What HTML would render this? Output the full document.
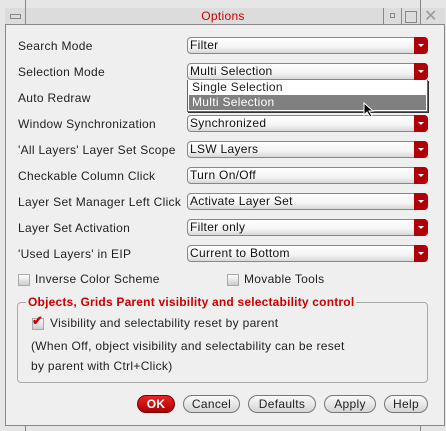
<!DOCTYPE html><html><head><style>
body{margin:0;width:446px;height:431px;background:#e6e6e6;position:relative;overflow:hidden;font-family:"Liberation Sans",sans-serif;font-size:12px;letter-spacing:0.3px;color:#222}
.a{position:absolute}
.l{position:absolute;left:18px}
.cb{position:absolute;left:187px;width:241px;height:17px;border:1px solid #888;border-radius:4px;background:linear-gradient(#fff,#f4f4f4 60%,#d8d8d8);box-sizing:border-box;padding-left:2px;line-height:15px;color:#111}
.cb i{position:absolute;right:-1px;top:-1px;width:14px;height:17px;background:#b00008;border-radius:0 4px 4px 0}
.cb i:after{content:"";position:absolute;left:4px;top:7px;border:3px solid transparent;border-top:3px solid #fff}
.btn{position:absolute;top:395px;height:18px;border:1px solid #777;border-radius:9px;background:linear-gradient(#fafafa,#d4d4d4);box-sizing:border-box;text-align:center;line-height:16px;color:#222}
.chk{position:absolute;width:10px;height:10px;background:linear-gradient(#fff,#ccc);border:1px solid #aaa}
</style></head><body>
<div class="a" style="left:5px;top:8px;width:440px;height:418px;background:#efefef;border:1px solid #888;box-sizing:border-box"></div>
<div class="a" style="left:5px;top:8px;width:440px;height:17px;background:#dcdcdc;border-bottom:1px solid #888;box-sizing:border-box"></div>
<div class="a" style="left:25px;top:0;width:1px;height:25px;background:#888"></div>
<div class="a" style="left:383px;top:8px;width:1px;height:17px;background:#888"></div>
<div class="a" style="left:401px;top:8px;width:1px;height:17px;background:#888"></div>
<div class="a" style="left:420px;top:0;width:1px;height:25px;background:#888"></div>
<div class="a" style="left:10px;top:14px;width:9px;height:3px;border:1px solid #888"></div>
<div class="a" style="left:390px;top:13px;width:3px;height:3px;border:1px solid #888"></div>
<div class="a" style="left:405px;top:11px;width:10px;height:10px;border:1px solid #888"></div>
<div class="a" style="left:424px;top:8px;color:#999;font-size:16px;line-height:17px">✕</div>
<div class="a" style="left:0;top:9px;width:446px;text-align:center;color:#c00;line-height:15px">Options</div>
<div class="a" style="left:25px;top:425px;width:1px;height:6px;background:#888"></div>
<div class="a" style="left:420px;top:425px;width:1px;height:6px;background:#888"></div>

<div class="l" style="top:39px">Search Mode</div>
<div class="l" style="top:65px">Selection Mode</div>
<div class="l" style="top:91px">Auto Redraw</div>
<div class="l" style="top:117px">Window Synchronization</div>
<div class="l" style="top:143px">'All Layers' Layer Set Scope</div>
<div class="l" style="top:169px">Checkable Column Click</div>
<div class="l" style="top:195px">Layer Set Manager Left Click</div>
<div class="l" style="top:221px">Layer Set Activation</div>
<div class="l" style="top:247px">'Used Layers' in EIP</div>

<div class="cb" style="top:37px">Filter<i></i></div>
<div class="cb" style="top:63px">Multi Selection<i></i></div>
<div class="cb" style="top:115px">Synchronized<i></i></div>
<div class="cb" style="top:141px">LSW Layers<i></i></div>
<div class="cb" style="top:167px">Turn On/Off<i></i></div>
<div class="cb" style="top:193px">Activate Layer Set<i></i></div>
<div class="cb" style="top:219px">Filter only<i></i></div>
<div class="cb" style="top:245px">Current to Bottom<i></i></div>

<div class="a" style="left:187px;top:80px;width:241px;height:32px;background:#fff;border:1px solid #666;border-top:none;box-sizing:border-box;box-shadow:1px 1px 0 #333">
<div style="padding-left:4px;line-height:15px">Single Selection</div>
<div style="margin:0 1px;padding-left:3px;background:#808080;color:#fff;line-height:15px">Multi Selection</div></div>
<svg class="a" style="left:363px;top:102px" width="12" height="16"><path d="M1 1 L1 13 L4 10 L7 15 L9 14 L6 9 L10 9 Z" fill="#000" stroke="#fff" stroke-width="1"/></svg>

<div class="chk" style="left:18px;top:274px"></div><div class="a" style="left:35px;top:272px">Inverse Color Scheme</div>
<div class="chk" style="left:227px;top:274px"></div><div class="a" style="left:244px;top:272px">Movable Tools</div>

<div class="a" style="left:17px;top:302px;width:411px;height:81px;border:1px solid #aaa;border-radius:4px;box-sizing:border-box"></div>
<div class="a" style="left:26px;top:295px;background:#efefef;color:#c00;font-weight:bold;padding:0 2px;letter-spacing:0.2px">Objects, Grids Parent visibility and selectability control</div>
<div class="chk" style="left:32px;top:318px"></div>
<div class="a" style="left:32px;top:313px;color:#c00;font-size:13px;font-weight:bold">✔</div>
<div class="a" style="left:50px;top:316px">Visibility and selectability reset by parent</div>
<div class="a" style="left:31px;top:339px">(When Off, object visibility and selectability can be reset</div>
<div class="a" style="left:31px;top:359px">by parent with Ctrl+Click)</div>

<div class="btn" style="left:137px;width:38px;background:linear-gradient(#e22,#a00);color:#fff;font-weight:bold;border-color:#700">OK</div>
<div class="btn" style="left:183px;width:57px">Cancel</div>
<div class="btn" style="left:248px;width:68px">Defaults</div>
<div class="btn" style="left:324px;width:52px">Apply</div>
<div class="btn" style="left:384px;width:44px">Help</div>
</body></html>
